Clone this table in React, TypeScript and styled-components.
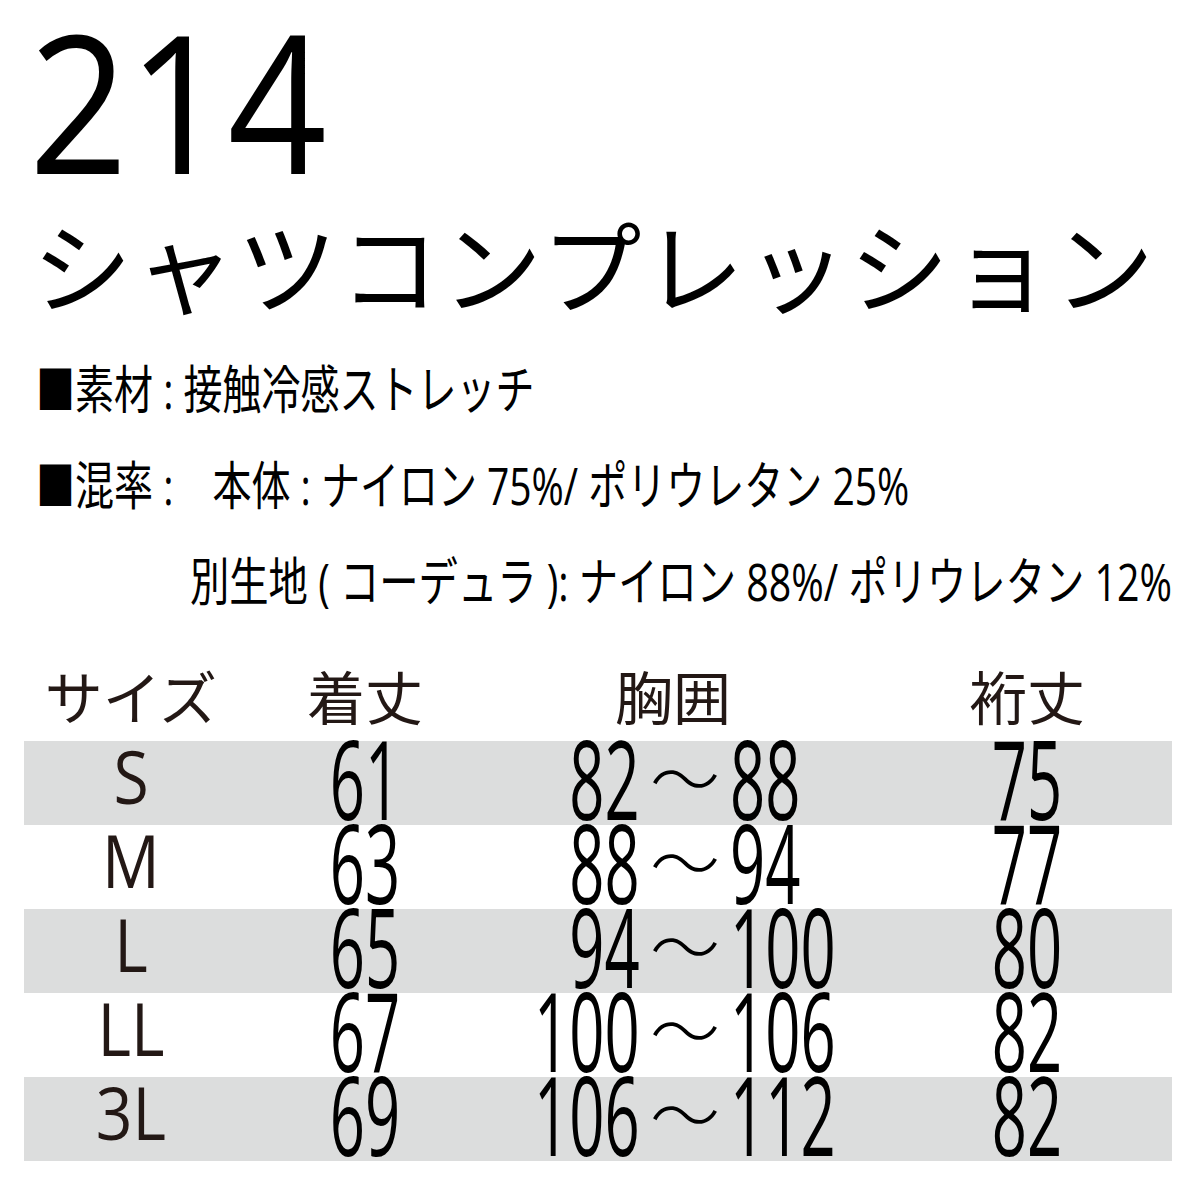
import React from 'react'
import styled, { createGlobalStyle } from 'styled-components';

const GlobalStyle = createGlobalStyle`
    html, body {
        margin: 0;
        padding: 0;
        background: #fff;
        overflow: hidden;
    }
    body {
        font-family: "Noto Sans CJK JP", sans-serif;
        color: #000;
    }
`;

const COLS = '214px 254px 390px 290px';

interface IRow {
    size: string;
    length: string;
    chest: [string, string];
    sleeve: string;
}

const rows: IRow[] = [
    { size: 'S', length: '61', chest: ['82', '88'], sleeve: '75' },
    { size: 'M', length: '63', chest: ['88', '94'], sleeve: '77' },
    { size: 'L', length: '65', chest: ['94', '100'], sleeve: '80' },
    { size: 'LL', length: '67', chest: ['100', '106'], sleeve: '82' },
    { size: '3L', length: '69', chest: ['106', '112'], sleeve: '82' },
];

const App = () => {
    return (
        <>
            <GlobalStyle />
            <Page>
                <ModelNo>214</ModelNo>
                <ProductName>シャツコンプレッション</ProductName>

                <SpecList>
                    <SpecLine $indent={36}>
                        <Narrow $sx={0.75}>■素材 : 接触冷感ストレッチ</Narrow>
                    </SpecLine>
                    <SpecLine $indent={36}>
                        <Narrow $sx={0.75}>■混率 :　本体 : ナイロン 75%/ ポリウレタン 25%</Narrow>
                    </SpecLine>
                    <SpecLine $indent={190}>
                        <Narrow $sx={0.756}>別生地 ( コーデュラ ): ナイロン 88%/ ポリウレタン 12%</Narrow>
                    </SpecLine>
                </SpecList>

                <SizeTable>
                    <HeaderRow>
                        <HeadCell>サイズ</HeadCell>
                        <HeadCell>着丈</HeadCell>
                        <HeadCell $shift={-14}>胸囲</HeadCell>
                        <HeadCell>裄丈</HeadCell>
                    </HeaderRow>
                    {rows.map((r, i) => (
                        <Row key={r.size} $shaded={i % 2 === 0}>
                            <Cell>
                                <SizeLabel>{r.size}</SizeLabel>
                            </Cell>
                            <Cell>
                                <Num>{r.length}</Num>
                            </Cell>
                            <Range>
                                <RangeSide $align="end">
                                    <Num $origin="right">{r.chest[0]}</Num>
                                </RangeSide>
                                <Tilde>～</Tilde>
                                <RangeSide $align="start">
                                    <Num $origin="left">{r.chest[1]}</Num>
                                </RangeSide>
                            </Range>
                            <Cell>
                                <Num>{r.sleeve}</Num>
                            </Cell>
                        </Row>
                    ))}
                </SizeTable>
            </Page>
        </>
    )
}

const Page = styled.div`
    width: 1199px;
    height: 1199px;
    box-sizing: border-box;
    padding-top: 3px;
    display: flex;
    flex-direction: column;
    overflow: hidden;
`;

const ModelNo = styled.div`
    font-family: "Open Sans", sans-serif;
    font-size: 193px;
    line-height: 193px;
    padding-left: 32px;
    transform: scaleX(0.9);
    transform-origin: left center;
`;

const ProductName = styled.div`
    margin-top: 7px;
    padding-left: 32px;
    font-size: 100px;
    line-height: 120px;
    letter-spacing: 2.5px;
    white-space: nowrap;
`;

const SpecList = styled.div`
    margin-top: 18px;
    display: flex;
    flex-direction: column;
`;

const SpecLine = styled.div<{ $indent: number }>`
    height: 96px;
    line-height: 96px;
    padding-left: ${p => p.$indent}px;
    white-space: nowrap;
`;

const Narrow = styled.span<{ $sx: number }>`
    display: inline-block;
    font-family: "Open Sans", "Noto Sans CJK JP", sans-serif;
    font-size: 52px;
    transform: scaleX(${p => p.$sx});
    transform-origin: left center;
`;

const SizeTable = styled.div`
    margin-top: 28px;
    margin-left: 24px;
    width: 1148px;
    display: flex;
    flex-direction: column;
`;

const HeaderRow = styled.div`
    display: grid;
    grid-template-columns: ${COLS};
    height: 84px;
    box-sizing: border-box;
    padding-bottom: 8px;
    align-items: center;
`;

const HeadCell = styled.div<{ $shift?: number }>`
    text-align: center;
    font-size: 58px;
    line-height: 1;
    color: #231815;
    transform: translateX(${p => p.$shift ?? 0}px);
`;

const Row = styled.div<{ $shaded: boolean }>`
    display: grid;
    grid-template-columns: ${COLS};
    height: 84px;
    align-items: center;
    background: ${p => (p.$shaded ? '#dcdddd' : 'transparent')};
`;

const Cell = styled.div`
    display: flex;
    justify-content: center;
    align-items: center;
    height: 84px;
`;

const SizeLabel = styled.span`
    display: inline-block;
    font-family: "Open Sans", sans-serif;
    font-size: 73px;
    line-height: 84px;
    color: #231815;
    transform: translateY(-7px) scaleX(0.88);
`;

const Num = styled.span<{ $origin?: string }>`
    display: inline-block;
    font-family: "Open Sans", sans-serif;
    font-size: 110px;
    font-weight: 400;
    line-height: 84px;
    transform: translateY(-6px) scaleX(0.56);
    transform-origin: ${p => p.$origin ?? 'center'} center;
`;

const Range = styled.div`
    display: grid;
    grid-template-columns: 148px 90px 1fr;
    align-items: center;
    height: 84px;
`;

const RangeSide = styled.div<{ $align: 'start' | 'end' }>`
    display: flex;
    justify-content: ${p => (p.$align === 'end' ? 'flex-end' : 'flex-start')};
    min-width: 0;
`;

const Tilde = styled.span`
    text-align: center;
    font-family: "Noto Sans CJK JP", sans-serif;
    font-size: 70px;
    font-weight: 300;
    line-height: 84px;
    transform: translateY(-7px);
`;

export default App
